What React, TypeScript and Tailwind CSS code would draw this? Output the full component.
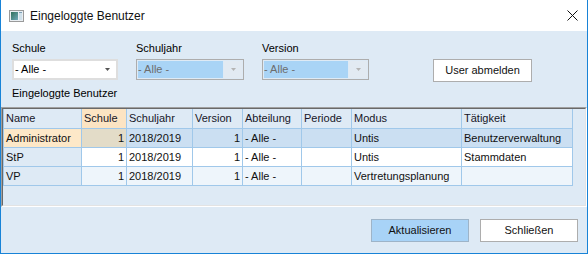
import React from "react";

const headers = ["Name", "Schule", "Schuljahr", "Version", "Abteilung", "Periode", "Modus", "Tätigkeit"];
const widths = ["w-[79px]", "w-[45px]", "w-[66px]", "w-[50px]", "w-[59px]", "w-[50px]", "w-[110px]", "w-[111px]"];
const rightAligned = [false, true, false, true, false, false, false, false];

type Variant = "sel" | "plain" | "alt";
const rows: { cells: string[]; v: Variant }[] = [
  { cells: ["Administrator", "1", "2018/2019", "1", "- Alle -", "", "Untis", "Benutzerverwaltung"], v: "sel" },
  { cells: ["StP", "1", "2018/2019", "1", "- Alle -", "", "Untis", "Stammdaten"], v: "plain" },
  { cells: ["VP", "1", "2018/2019", "1", "- Alle -", "", "Vertretungsplanung", ""], v: "alt" },
];

function cellBg(v: Variant, i: number) {
  if (v === "sel") {
    if (i === 0) return "bg-[#fde8c8]";
    if (i === 1) return "bg-[#e3dcc8]";
    return "bg-[#cbdff2]";
  }
  if (i === 0) return "bg-[#deeaf5]";
  if (v === "plain") return "bg-white";
  return "bg-[#eef5fb]";
}

function TitleIcon() {
  return (
    <svg width="15" height="12" viewBox="0 0 15 12" className="shrink-0">
      <defs>
        <linearGradient id="g1" x1="0" y1="0" x2="1" y2="1">
          <stop offset="0" stopColor="#2f6f5a" />
          <stop offset="1" stopColor="#6fa8b8" />
        </linearGradient>
      </defs>
      <rect x="0.5" y="0.5" width="14" height="11" fill="#e9eef2" stroke="#9a9a9a" />
      <rect x="2" y="2" width="7" height="8" fill="url(#g1)" />
      <rect x="10" y="2" width="3" height="8" fill="#cfe0ea" />
      <rect x="10" y="2" width="3" height="1" fill="#7d9fb5" />
    </svg>
  );
}

function CloseIcon() {
  return (
    <svg width="11" height="11" viewBox="0 0 11 11" className="shrink-0">
      <path d="M0.5 0.5 L10.5 10.5 M10.5 0.5 L0.5 10.5" stroke="#111" strokeWidth="1" />
    </svg>
  );
}

function Arrow({ color }: { color: string }) {
  return (
    <svg width="5" height="3" viewBox="0 0 5 3">
      <path d="M0 0 H5 L2.5 3 Z" fill={color} />
    </svg>
  );
}

function EnabledCombo() {
  return (
    <div className="w-[106px] h-[21px] bg-white border-2 border-[#dedede] flex items-center">
      <span className="flex-1 pl-[1px] leading-[13px]">- Alle -</span>
      <div className="w-[17px] flex items-center justify-center">
        <Arrow color="#555555" />
      </div>
    </div>
  );
}

function DisabledCombo({ w }: { w: string }) {
  return (
    <div className={`${w} h-[21px] border border-[#adadad] p-[1px] flex`}>
      <div className="flex-1 bg-[#a9d4f6] text-[#6d6d6d] flex items-center leading-[13px]">- Alle -</div>
      <div className="w-[18px] ml-[1px] bg-[#e2eaf2] flex items-center justify-center">
        <Arrow color="#b4b4b4" />
      </div>
    </div>
  );
}

export default function App() {
  return (
    <div className="w-[588px] h-[254px] flex flex-col bg-white border-x border-b border-[#1883d7] font-['Liberation_Sans',Arial,sans-serif] text-[11px] text-black overflow-hidden">
      {/* Title bar */}
      <div className="h-[31px] shrink-0 flex items-center pl-[8px] pr-[9px] bg-white">
        <TitleIcon />
        <span className="ml-[6px] text-[12px] leading-[14px] text-[#111]">Eingeloggte Benutzer</span>
        <div className="flex-1" />
        <CloseIcon />
      </div>

      {/* Body */}
      <div className="flex-1 flex flex-col bg-[#deeaf5]">
        {/* Filter section */}
        <div className="h-[76px] shrink-0 pl-[11px] pt-[11px]">
          <div className="flex">
            <div className="flex flex-col">
              <span className="leading-[13px] h-[13px]">Schule</span>
              <div className="mt-[4px]">
                <EnabledCombo />
              </div>
            </div>
            <div className="flex flex-col ml-[18px]">
              <span className="leading-[13px] h-[13px]">Schuljahr</span>
              <div className="mt-[4px]">
                <DisabledCombo w="w-[108px]" />
              </div>
            </div>
            <div className="flex flex-col ml-[18px]">
              <span className="leading-[13px] h-[13px]">Version</span>
              <div className="mt-[4px]">
                <DisabledCombo w="w-[107px]" />
              </div>
            </div>
            <button className="ml-[64px] mt-[17px] w-[99px] h-[23px] bg-white border border-[#adadad] flex items-center justify-center leading-[13px] text-[#111]">
              User abmelden
            </button>
          </div>
          <div className="mt-[5px] leading-[13px]">Eingeloggte Benutzer</div>
        </div>

        {/* Grid */}
        <div className="h-[100px] shrink-0 border border-[#a0a0a0] border-r-white border-b-white">
          <div className="h-full border border-[#696969] border-r-[#e3e3e3] border-b-[#e3e3e3]">
            <div className="flex h-[20px]">
              {headers.map((h, i) => (
                <div
                  key={h}
                  className={`${widths[i]} ${i === 0 ? "border-l" : ""} ${i === 1 ? "bg-[#fce4c3]" : "bg-[#deeaf5]"} shrink-0 h-full border-r border-b border-[#a0c8ea] flex items-center pl-[2px] text-[#161628] whitespace-nowrap overflow-hidden`}
                >
                  {h}
                </div>
              ))}
            </div>
            {rows.map((r, ri) => (
              <div key={ri} className="flex h-[19px]">
                {r.cells.map((c, i) => (
                  <div
                    key={i}
                    className={`${widths[i]} ${i === 0 ? "border-l" : ""} ${cellBg(r.v, i)} ${rightAligned[i] ? "justify-end pr-[2px]" : "pl-[2px]"} shrink-0 h-full border-r border-b border-[#a0c8ea] flex items-center text-[#111] whitespace-nowrap overflow-hidden`}
                  >
                    {c}
                  </div>
                ))}
              </div>
            ))}
          </div>
        </div>

        {/* Bottom buttons */}
        <div className="flex-1 flex justify-end items-start pt-[12px] pr-[9px] gap-[11px]">
          <button className="w-[98px] h-[23px] bg-[#a8d3f7] border border-[#9eb4c8] flex items-center justify-center leading-[13px] text-[#111]">
            Aktualisieren
          </button>
          <button className="w-[98px] h-[23px] bg-white border border-[#adadad] flex items-center justify-center leading-[13px] text-[#111]">
            Schließen
          </button>
        </div>
      </div>
    </div>
  );
}
